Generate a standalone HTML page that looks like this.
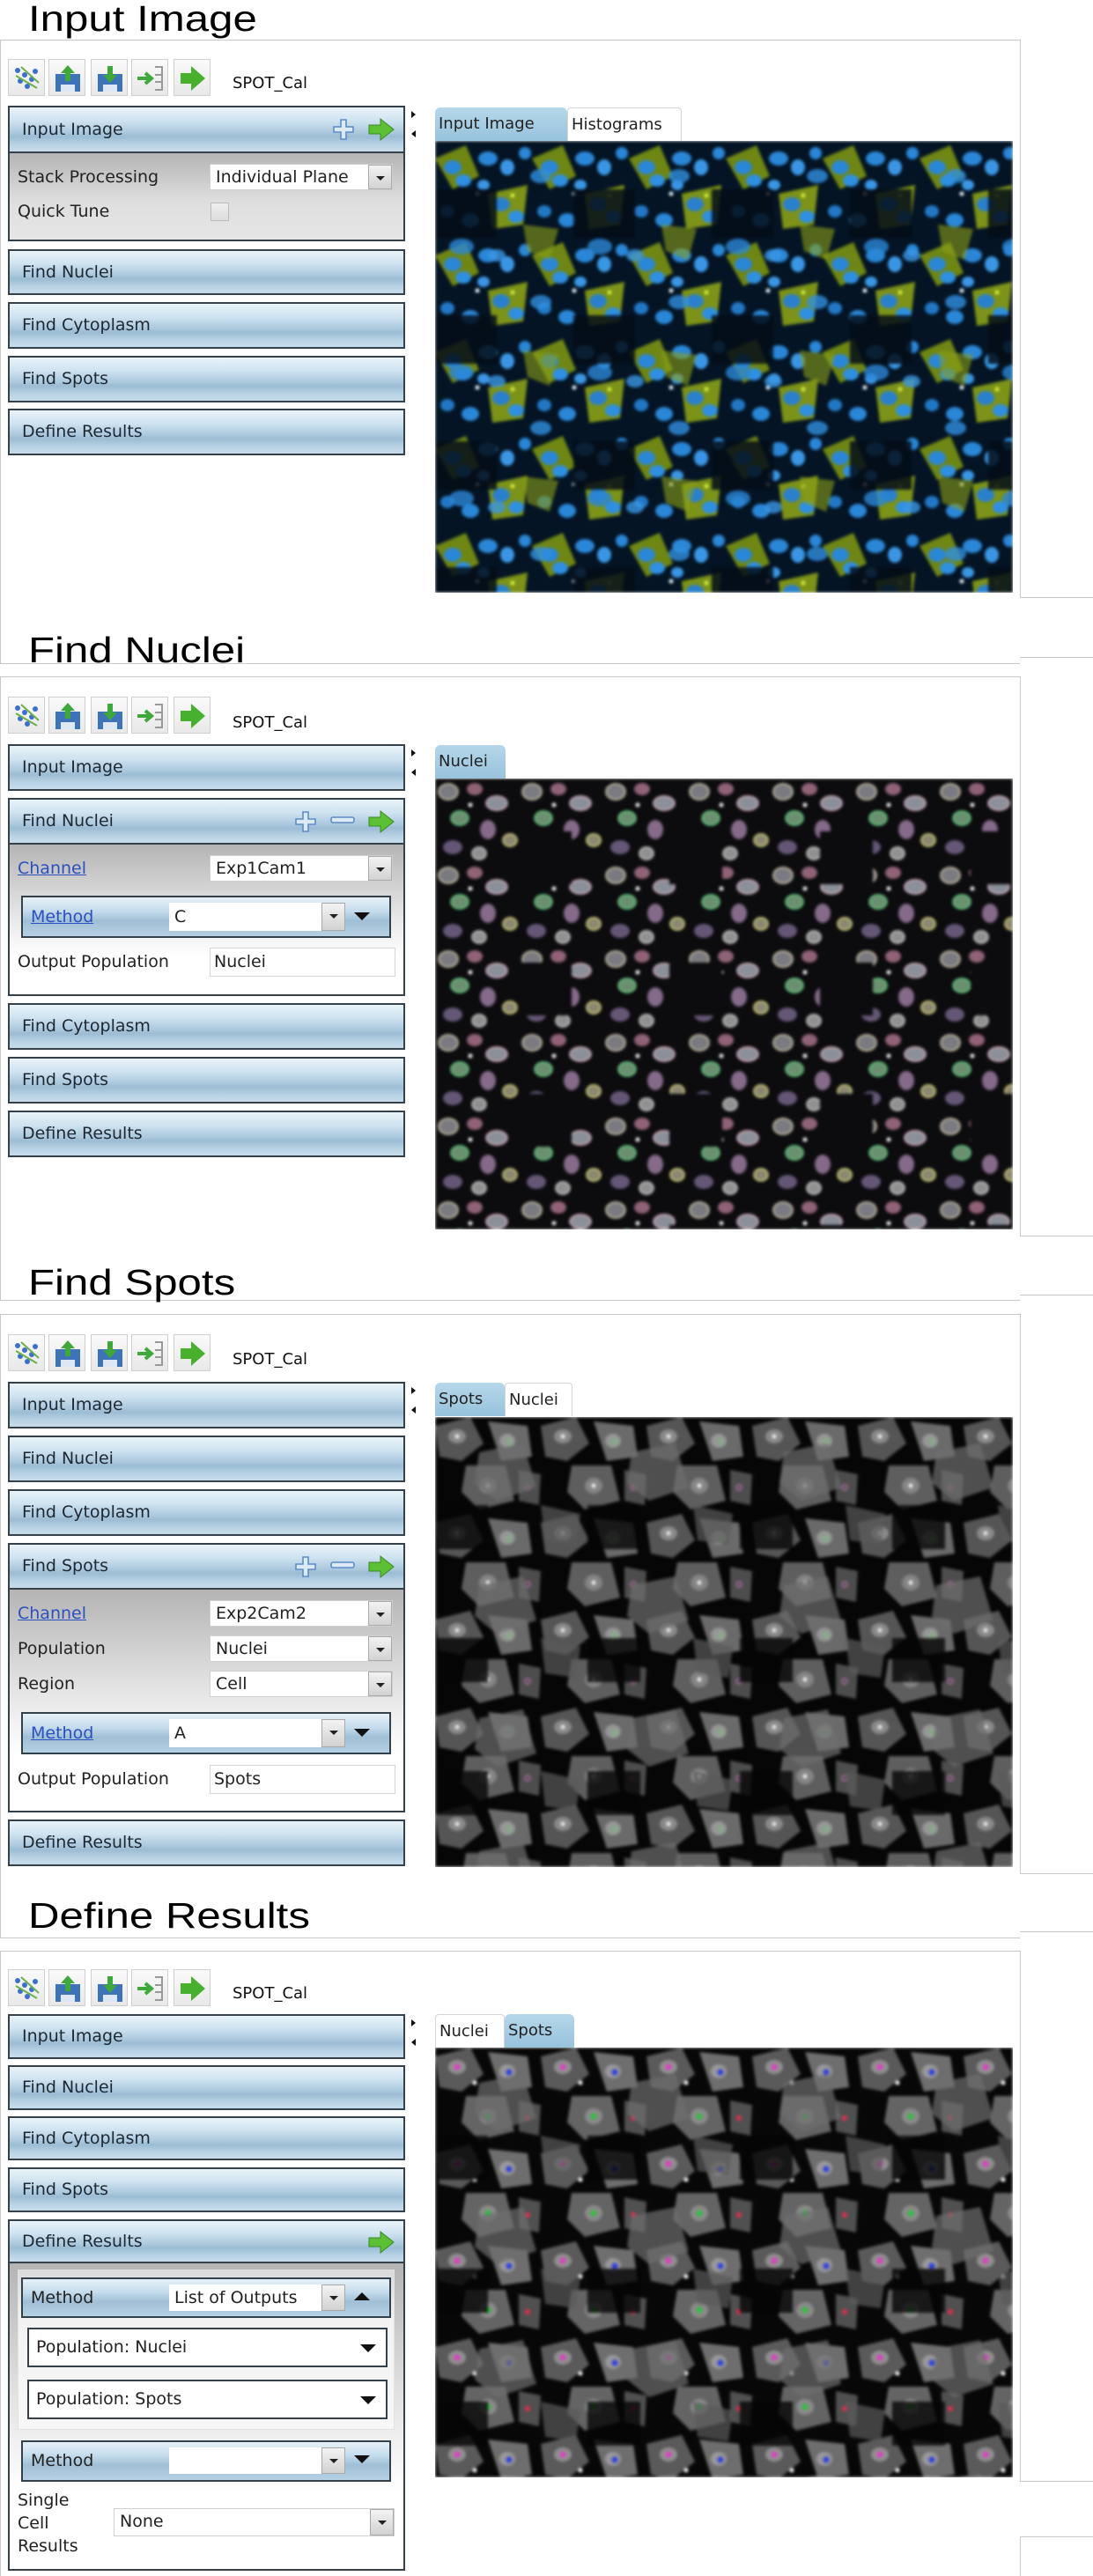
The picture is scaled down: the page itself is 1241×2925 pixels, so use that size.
<!DOCTYPE html>
<html><head><meta charset="utf-8">
<style>
*{margin:0;padding:0;box-sizing:border-box}
body{width:1241px;height:2925px;background:#fff;position:relative;overflow:hidden;font-family:"DejaVu Sans","Liberation Sans",sans-serif}
.a{position:absolute}
.ttl{position:absolute;left:32px;font:41px/41px "Liberation Sans",sans-serif;color:#000;transform:scaleX(1.2);transform-origin:0 0;white-space:nowrap}
.ln{position:absolute;background:#c8c8c8}
.ic{position:absolute;width:42px;height:42px;border:1px solid #cfcfcf;background:linear-gradient(#fafafa,#e8e8e8)}
.ic svg{position:absolute;left:4px;top:4px}
.spot{position:absolute;left:264px;font-size:18px;color:#111}
.hd{position:absolute;left:9px;width:451px;border:2px solid #34414b;background:linear-gradient(#e9f3f9 0%,#cfe3f0 30%,#a9c7dd 58%,#9bbcd4 66%,#b9d3e5 85%,#c7dcea 100%);font-size:19px;color:#1d2832;padding-left:14px}
.bd{position:absolute;left:9px;width:451px;border:2px solid #34414b;border-top:none}
.g1{background:linear-gradient(#b4b4b4 0%,#dedede 55%,#e6e6e6 100%)}
.g2{background:linear-gradient(#b4b4b4 0%,#e4e4e4 45%,#fff 75%,#fff 100%)}
.lb{position:absolute;left:20px;font-size:19px;color:#222;white-space:nowrap}
.lk{color:#2a4fc0;text-decoration:underline}
.sel{position:absolute;left:238px;width:208px;height:30px;background:#fff;border:1px solid #d0d0d0;font-size:19px;color:#222;padding-left:6px;line-height:28px;white-space:nowrap;overflow:hidden}
.sel .b,.mth .b{position:absolute;right:0;top:0;width:27px;height:100%;border:1px solid #a9a9a9;background:linear-gradient(#f3f3f3,#d2d2d2)}
.sel .b:after,.mth .b:after{content:"";position:absolute;left:8px;top:12px;border-left:5px solid transparent;border-right:5px solid transparent;border-top:5px solid #222}
.inp{position:absolute;left:238px;width:211px;height:33px;background:#fff;border:1px solid #d5d5d5;font-size:19px;color:#222;padding-left:4px;line-height:31px}
.mb{position:absolute;left:24px;width:420px;border:2px solid #34414b;background:linear-gradient(#e6f1f8 0%,#c5dcec 35%,#a0bfd6 60%,#b6d0e3 100%)}
.mb .t{position:absolute;left:9px;font-size:19px}
.mth{position:absolute;left:166px;width:200px;background:#fff;font-size:19px;padding-left:6px;color:#222;white-space:nowrap;overflow:hidden}
.tri{position:absolute;width:0;height:0;border-left:9px solid transparent;border-right:9px solid transparent}
.tri.dn{border-top:9px solid #111}
.tri.up{border-bottom:9px solid #111}
.tab{position:absolute;height:38px;font-size:18px;line-height:38px;padding:0 4px;color:#222;white-space:nowrap}
.tab.on{background:linear-gradient(#b6d7ea,#97c3dc);border-radius:6px 6px 0 0}
.tab.off{background:#fff;border:1px solid #d5d5d5;border-bottom:none;border-radius:4px 4px 0 0}
.pop{position:absolute;left:31px;width:409px;height:45px;background:#fff;border:2px solid #34414b;font-size:19px;color:#222;padding-left:8px;line-height:41px}
.col{position:absolute;left:467px;width:0;height:0;border-top:4px solid transparent;border-bottom:4px solid transparent}
.im{position:absolute;overflow:hidden}
.im svg{display:block;filter:blur(1.5px)}
</style></head><body>

<svg width="0" height="0" style="position:absolute">
<defs>
<pattern id="p1" width="110" height="110" patternUnits="userSpaceOnUse">
<rect width="110" height="110" fill="#041424"/>
<path d="M0 20L35 5L50 40L20 55Z" fill="#6f8614"/>
<path d="M60 60L105 50L100 95L65 100Z" fill="#7c9218"/>
<ellipse cx="20" cy="30" rx="10" ry="8" fill="#2a86d6"/>
<ellipse cx="32" cy="45" rx="9" ry="7" fill="#2f8fe0"/>
<ellipse cx="60" cy="20" rx="11" ry="8" fill="#2a86d6"/>
<ellipse cx="82" cy="30" rx="8" ry="9" fill="#3a96e4"/>
<ellipse cx="75" cy="72" rx="10" ry="8" fill="#2a80cc"/>
<ellipse cx="92" cy="86" rx="9" ry="7" fill="#2f8fe0"/>
<ellipse cx="40" cy="90" rx="10" ry="8" fill="#2a86d6"/>
<ellipse cx="14" cy="80" rx="8" ry="7" fill="#2277c4"/>
<ellipse cx="55" cy="50" rx="7" ry="6" fill="#3a96e4"/>
<ellipse cx="102" cy="14" rx="7" ry="7" fill="#2a86d6"/>
<circle cx="48" cy="60" r="2.5" fill="#e8f4ff"/><circle cx="88" cy="62" r="2.5" fill="#d8f040"/>
</pattern>
<pattern id="p1b" width="157" height="143" patternUnits="userSpaceOnUse">
<rect x="0" y="55" width="70" height="55" fill="#030d18" opacity=".85"/>
<ellipse cx="30" cy="120" rx="14" ry="9" fill="#2a86d6" opacity=".8"/>
<ellipse cx="120" cy="40" rx="12" ry="8" fill="#2f8fe0" opacity=".8"/>
<path d="M100 95L140 100L130 135L105 125Z" fill="#8a9e18" opacity=".6"/>
<ellipse cx="70" cy="130" rx="10" ry="7" fill="#3a96e4" opacity=".8"/>
</pattern>
<pattern id="p2" width="95" height="95" patternUnits="userSpaceOnUse">
<rect width="95" height="95" fill="#0c0b0e"/>
<ellipse cx="15" cy="15" rx="11" ry="9" fill="#7a7a80" stroke="#d8d0b0" stroke-width="1.5"/>
<ellipse cx="45" cy="12" rx="9" ry="7" fill="#b07890" opacity=".8"/>
<ellipse cx="70" cy="28" rx="12" ry="8" fill="#8a8f98" stroke="#e0b8c8" stroke-width="1.5"/>
<ellipse cx="28" cy="45" rx="10" ry="8" fill="#6a9070" stroke="#60d080" stroke-width="1.5"/>
<ellipse cx="60" cy="58" rx="9" ry="11" fill="#9a7aa0" opacity=".85"/>
<ellipse cx="85" cy="70" rx="8" ry="7" fill="#8a8870" stroke="#e0e080" stroke-width="1.5"/>
<ellipse cx="20" cy="78" rx="11" ry="8" fill="#7a6a90" opacity=".8"/>
<ellipse cx="50" cy="85" rx="8" ry="7" fill="#909090" stroke="#d0d0d0" stroke-width="1.5"/>
<circle cx="40" cy="30" r="2.5" fill="#f0f0f0"/>
</pattern>
<pattern id="p2b" width="171" height="149" patternUnits="userSpaceOnUse">
<rect x="95" y="60" width="60" height="60" fill="#0c0b0e"/>
</pattern>
<pattern id="p3" width="120" height="110" patternUnits="userSpaceOnUse">
<rect width="120" height="110" fill="#060606"/>
<path d="M0 10L40 0L55 30L30 50L5 45Z" fill="#555"/>
<path d="M60 5L105 10L110 45L75 50Z" fill="#6a6a6a"/>
<path d="M35 55L80 55L90 95L50 105L30 85Z" fill="#5e5e5e"/>
<path d="M95 60L120 65L118 100L95 95Z" fill="#4d4d4d"/>
<ellipse cx="25" cy="22" rx="10" ry="8" fill="#8a8a8a"/>
<ellipse cx="82" cy="27" rx="9" ry="8" fill="#969696"/>
<ellipse cx="60" cy="78" rx="10" ry="9" fill="#858585"/>
<circle cx="25" cy="22" r="2.5" fill="#eee"/><circle cx="60" cy="78" r="2.5" fill="#f4f4f4"/>
<circle cx="84" cy="28" r="3" fill="none" stroke="#70d070" stroke-width="1"/>
<circle cx="105" cy="80" r="3" fill="none" stroke="#e080d0" stroke-width="1"/>
</pattern>
<pattern id="p3b" width="173" height="151" patternUnits="userSpaceOnUse">
<path d="M50 40L100 30L115 80L70 95L45 75Z" fill="#6e6e6e" opacity=".7"/>
<path d="M120 100L165 110L160 145L125 140Z" fill="#5a5a5a" opacity=".7"/>
<rect x="0" y="100" width="60" height="50" fill="#050505" opacity=".8"/>
</pattern>
<pattern id="p4" width="120" height="110" patternUnits="userSpaceOnUse">
<rect width="120" height="110" fill="#070707"/>
<path d="M0 10L40 0L55 30L30 50L5 45Z" fill="#5a5a5a"/>
<path d="M60 5L105 10L110 45L75 50Z" fill="#6e6e6e"/>
<path d="M35 55L80 55L90 95L50 105L30 85Z" fill="#646464"/>
<path d="M95 60L120 65L118 100L95 95Z" fill="#505050"/>
<ellipse cx="25" cy="22" rx="10" ry="8" fill="#8f8f8f"/>
<ellipse cx="82" cy="27" rx="9" ry="8" fill="#999"/>
<ellipse cx="60" cy="78" rx="10" ry="9" fill="#8a8a8a"/>
<circle cx="25" cy="22" r="3.5" fill="#e040c0"/><circle cx="60" cy="78" r="3.5" fill="#30c040"/>
<circle cx="84" cy="28" r="3.5" fill="#3040e0"/>
<circle cx="105" cy="80" r="3" fill="#e03050"/>
<circle cx="45" cy="40" r="2.5" fill="#fff"/>
</pattern>
</defs></svg>

<!-- frame lines -->
<div class="ln" style="left:0;top:45px;width:1158px;height:1px"></div>
<div class="ln" style="left:0;top:45px;width:1px;height:708px"></div>
<div class="ln" style="left:1158px;top:45px;width:1px;height:634px"></div>
<div class="ln" style="left:1158px;top:678px;width:83px;height:1px"></div>
<div class="ln" style="left:0;top:753px;width:1158px;height:1px"></div>
<div class="ln" style="left:1158px;top:746px;width:83px;height:1px"></div>

<div class="ln" style="left:0;top:768px;width:1158px;height:1px"></div>
<div class="ln" style="left:0;top:768px;width:1px;height:709px"></div>
<div class="ln" style="left:1158px;top:768px;width:1px;height:635px"></div>
<div class="ln" style="left:1158px;top:1403px;width:83px;height:1px"></div>
<div class="ln" style="left:0;top:1476px;width:1158px;height:1px"></div>
<div class="ln" style="left:1158px;top:1470px;width:83px;height:1px"></div>

<div class="ln" style="left:0;top:1492px;width:1158px;height:1px"></div>
<div class="ln" style="left:0;top:1492px;width:1px;height:709px"></div>
<div class="ln" style="left:1158px;top:1492px;width:1px;height:635px"></div>
<div class="ln" style="left:1158px;top:2127px;width:83px;height:1px"></div>
<div class="ln" style="left:0;top:2200px;width:1158px;height:1px"></div>
<div class="ln" style="left:1158px;top:2193px;width:83px;height:1px"></div>

<div class="ln" style="left:0;top:2215px;width:1158px;height:1px"></div>
<div class="ln" style="left:0;top:2215px;width:1px;height:710px"></div>
<div class="ln" style="left:1158px;top:2215px;width:1px;height:602px"></div>
<div class="ln" style="left:1158px;top:2817px;width:83px;height:1px"></div>
<div class="ln" style="left:1158px;top:2880px;width:83px;height:1px"></div>
<div class="ln" style="left:1158px;top:2880px;width:1px;height:45px"></div>

<!-- titles -->
<div class="ttl" style="top:1px">Input Image</div>
<div class="ttl" style="top:718px">Find Nuclei</div>
<div class="ttl" style="top:1436px">Find Spots</div>
<div class="ttl" style="top:2155px">Define Results</div>

<!-- SECTION 1 -->
<div class="ic" style="left:9px;top:67px"><svg width="34" height="34"><g fill="#3b6fd0"><circle cx="6" cy="8" r="3"/><circle cx="14" cy="13" r="3"/><circle cx="22" cy="18" r="3"/><circle cx="9" cy="20" r="3"/><circle cx="17" cy="26" r="3"/><circle cx="26" cy="9" r="3"/></g><path d="M4 14L28 28M10 4L30 22" stroke="#6ab04a" stroke-width="2"/></svg></div>
<div class="ic" style="left:55px;top:67px"><svg width="34" height="34"><rect x="3" y="12" width="28" height="20" fill="#3f73b8"/><rect x="9" y="24" width="16" height="8" fill="#dde8f4"/><path d="M17 2L25 11H20V20H14V11H9Z" fill="#3fa83a"/></svg></div>
<div class="ic" style="left:103px;top:67px"><svg width="34" height="34"><rect x="3" y="12" width="28" height="20" fill="#3f73b8"/><rect x="9" y="24" width="16" height="8" fill="#dde8f4"/><path d="M17 22L25 13H20V3H14V13H9Z" fill="#3fa83a"/></svg></div>
<div class="ic" style="left:149px;top:67px"><svg width="34" height="34"><path d="M22 4H30V30H22M22 13H30M22 21H30" stroke="#999" stroke-width="2" fill="none"/><path d="M2 17H16M11 11L18 17L11 23" stroke="#3fa83a" stroke-width="4" fill="none"/></svg></div>
<div class="ic" style="left:197px;top:67px"><svg width="34" height="34"><path d="M3 11H15V3L31 17L15 31V23H3Z" fill="#47b02c"/></svg></div>
<div class="spot" style="top:84px">SPOT_Cal</div>

<div class="hd" style="top:120px;height:54px;line-height:50px">Input Image
<svg class="a" style="left:366px;top:12px" width="26" height="26"><path d="M10 2H16V10H24V16H16V24H10V16H2V10H10Z" fill="#dceaf6" stroke="#5b8cc8" stroke-width="1.6"/></svg>
<svg class="a" style="left:406px;top:11px" width="32" height="28"><path d="M2 9H15V2L30 14L15 26V19H2Z" fill="#5cc035" stroke="#3a8a20" stroke-width="1"/></svg></div>
<div class="bd g1" style="top:174px;height:100px"></div>
<div class="lb" style="top:190px">Stack Processing</div>
<div class="sel" style="top:186px">Individual Plane<div class="b"></div></div>
<div class="lb" style="top:229px">Quick Tune</div>
<div class="a" style="left:239px;top:230px;width:21px;height:21px;border:1px solid #bbb;background:linear-gradient(#eee,#ddd)"></div>
<div class="hd" style="top:283px;height:52px;line-height:48px">Find Nuclei</div>
<div class="hd" style="top:343px;height:53px;line-height:49px">Find Cytoplasm</div>
<div class="hd" style="top:404px;height:53px;line-height:49px">Find Spots</div>
<div class="hd" style="top:464px;height:53px;line-height:49px">Define Results</div>
<div class="col" style="top:126px;border-left:5px solid #111"></div>
<div class="col" style="top:148px;border-right:5px solid #111;left:467px"></div>
<div class="tab on" style="left:494px;top:122px;width:150px">Input Image</div>
<div class="tab off" style="left:644px;top:122px;width:130px">Histograms</div>
<div class="im" style="left:494px;top:160px;width:656px;height:513px"><svg width="656" height="513"><rect width="656" height="513" fill="url(#p1)"/><rect width="656" height="513" fill="url(#p1b)"/></svg></div>

<!-- SECTION 2 -->
<div class="ic" style="left:9px;top:791px"><svg width="34" height="34"><g fill="#3b6fd0"><circle cx="6" cy="8" r="3"/><circle cx="14" cy="13" r="3"/><circle cx="22" cy="18" r="3"/><circle cx="9" cy="20" r="3"/><circle cx="17" cy="26" r="3"/><circle cx="26" cy="9" r="3"/></g><path d="M4 14L28 28M10 4L30 22" stroke="#6ab04a" stroke-width="2"/></svg></div>
<div class="ic" style="left:55px;top:791px"><svg width="34" height="34"><rect x="3" y="12" width="28" height="20" fill="#3f73b8"/><rect x="9" y="24" width="16" height="8" fill="#dde8f4"/><path d="M17 2L25 11H20V20H14V11H9Z" fill="#3fa83a"/></svg></div>
<div class="ic" style="left:103px;top:791px"><svg width="34" height="34"><rect x="3" y="12" width="28" height="20" fill="#3f73b8"/><rect x="9" y="24" width="16" height="8" fill="#dde8f4"/><path d="M17 22L25 13H20V3H14V13H9Z" fill="#3fa83a"/></svg></div>
<div class="ic" style="left:149px;top:791px"><svg width="34" height="34"><path d="M22 4H30V30H22M22 13H30M22 21H30" stroke="#999" stroke-width="2" fill="none"/><path d="M2 17H16M11 11L18 17L11 23" stroke="#3fa83a" stroke-width="4" fill="none"/></svg></div>
<div class="ic" style="left:197px;top:791px"><svg width="34" height="34"><path d="M3 11H15V3L31 17L15 31V23H3Z" fill="#47b02c"/></svg></div>
<div class="spot" style="top:810px">SPOT_Cal</div>

<div class="hd" style="top:845px;height:53px;line-height:49px">Input Image</div>
<div class="hd" style="top:906px;height:53px;line-height:49px">Find Nuclei
<svg class="a" style="left:323px;top:12px" width="26" height="26"><path d="M10 2H16V10H24V16H16V24H10V16H2V10H10Z" fill="#dceaf6" stroke="#5b8cc8" stroke-width="1.6"/></svg>
<svg class="a" style="left:364px;top:19px" width="28" height="10"><rect x="1" y="1" width="26" height="6" rx="2" fill="#dceaf6" stroke="#5b8cc8" stroke-width="1.6"/></svg>
<svg class="a" style="left:406px;top:11px" width="32" height="28"><path d="M2 9H15V2L30 14L15 26V19H2Z" fill="#5cc035" stroke="#3a8a20" stroke-width="1"/></svg></div>
<div class="bd g2" style="top:959px;height:172px"></div>
<div class="lb" style="top:975px"><span class="lk">Channel</span></div>
<div class="sel" style="top:971px">Exp1Cam1<div class="b"></div></div>
<div class="mb" style="top:1017px;height:48px"><span class="t lk" style="top:11px">Method</span>
<div class="mth" style="top:6px;height:32px;line-height:32px">C<div class="b"></div></div>
<div class="tri dn" style="left:376px;top:17px"></div></div>
<div class="lb" style="top:1081px">Output Population</div>
<div class="inp" style="top:1076px">Nuclei</div>
<div class="hd" style="top:1139px;height:53px;line-height:49px">Find Cytoplasm</div>
<div class="hd" style="top:1200px;height:53px;line-height:49px">Find Spots</div>
<div class="hd" style="top:1261px;height:53px;line-height:49px">Define Results</div>
<div class="col" style="top:851px;border-left:5px solid #111"></div>
<div class="col" style="top:873px;border-right:5px solid #111"></div>
<div class="tab on" style="left:494px;top:846px;width:80px">Nuclei</div>
<div class="im" style="left:494px;top:884px;width:656px;height:512px"><svg width="656" height="512"><rect width="656" height="512" fill="url(#p2)"/><rect width="656" height="512" fill="url(#p2b)"/></svg></div>

<!-- SECTION 3 -->
<div class="ic" style="left:9px;top:1515px"><svg width="34" height="34"><g fill="#3b6fd0"><circle cx="6" cy="8" r="3"/><circle cx="14" cy="13" r="3"/><circle cx="22" cy="18" r="3"/><circle cx="9" cy="20" r="3"/><circle cx="17" cy="26" r="3"/><circle cx="26" cy="9" r="3"/></g><path d="M4 14L28 28M10 4L30 22" stroke="#6ab04a" stroke-width="2"/></svg></div>
<div class="ic" style="left:55px;top:1515px"><svg width="34" height="34"><rect x="3" y="12" width="28" height="20" fill="#3f73b8"/><rect x="9" y="24" width="16" height="8" fill="#dde8f4"/><path d="M17 2L25 11H20V20H14V11H9Z" fill="#3fa83a"/></svg></div>
<div class="ic" style="left:103px;top:1515px"><svg width="34" height="34"><rect x="3" y="12" width="28" height="20" fill="#3f73b8"/><rect x="9" y="24" width="16" height="8" fill="#dde8f4"/><path d="M17 22L25 13H20V3H14V13H9Z" fill="#3fa83a"/></svg></div>
<div class="ic" style="left:149px;top:1515px"><svg width="34" height="34"><path d="M22 4H30V30H22M22 13H30M22 21H30" stroke="#999" stroke-width="2" fill="none"/><path d="M2 17H16M11 11L18 17L11 23" stroke="#3fa83a" stroke-width="4" fill="none"/></svg></div>
<div class="ic" style="left:197px;top:1515px"><svg width="34" height="34"><path d="M3 11H15V3L31 17L15 31V23H3Z" fill="#47b02c"/></svg></div>
<div class="spot" style="top:1533px">SPOT_Cal</div>

<div class="hd" style="top:1569px;height:53px;line-height:49px">Input Image</div>
<div class="hd" style="top:1630px;height:53px;line-height:49px">Find Nuclei</div>
<div class="hd" style="top:1691px;height:53px;line-height:49px">Find Cytoplasm</div>
<div class="hd" style="top:1752px;height:53px;line-height:49px">Find Spots
<svg class="a" style="left:323px;top:12px" width="26" height="26"><path d="M10 2H16V10H24V16H16V24H10V16H2V10H10Z" fill="#dceaf6" stroke="#5b8cc8" stroke-width="1.6"/></svg>
<svg class="a" style="left:364px;top:19px" width="28" height="10"><rect x="1" y="1" width="26" height="6" rx="2" fill="#dceaf6" stroke="#5b8cc8" stroke-width="1.6"/></svg>
<svg class="a" style="left:406px;top:11px" width="32" height="28"><path d="M2 9H15V2L30 14L15 26V19H2Z" fill="#5cc035" stroke="#3a8a20" stroke-width="1"/></svg></div>
<div class="bd g2" style="top:1805px;height:253px"></div>
<div class="lb" style="top:1821px"><span class="lk">Channel</span></div>
<div class="sel" style="top:1817px">Exp2Cam2<div class="b"></div></div>
<div class="lb" style="top:1861px">Population</div>
<div class="sel" style="top:1857px">Nuclei<div class="b"></div></div>
<div class="lb" style="top:1901px">Region</div>
<div class="sel" style="top:1897px">Cell<div class="b"></div></div>
<div class="mb" style="top:1944px;height:48px"><span class="t lk" style="top:11px">Method</span>
<div class="mth" style="top:6px;height:32px;line-height:32px">A<div class="b"></div></div>
<div class="tri dn" style="left:376px;top:17px"></div></div>
<div class="lb" style="top:2009px">Output Population</div>
<div class="inp" style="top:2004px">Spots</div>
<div class="hd" style="top:2066px;height:53px;line-height:49px">Define Results</div>
<div class="col" style="top:1575px;border-left:5px solid #111"></div>
<div class="col" style="top:1597px;border-right:5px solid #111"></div>
<div class="tab on" style="left:494px;top:1570px;width:79px">Spots</div>
<div class="tab off" style="left:573px;top:1570px;width:77px">Nuclei</div>
<div class="im" style="left:494px;top:1609px;width:656px;height:511px"><svg width="656" height="511"><rect width="656" height="511" fill="url(#p3)"/><rect width="656" height="511" fill="url(#p3b)"/></svg></div>

<!-- SECTION 4 -->
<div class="ic" style="left:9px;top:2236px"><svg width="34" height="34"><g fill="#3b6fd0"><circle cx="6" cy="8" r="3"/><circle cx="14" cy="13" r="3"/><circle cx="22" cy="18" r="3"/><circle cx="9" cy="20" r="3"/><circle cx="17" cy="26" r="3"/><circle cx="26" cy="9" r="3"/></g><path d="M4 14L28 28M10 4L30 22" stroke="#6ab04a" stroke-width="2"/></svg></div>
<div class="ic" style="left:55px;top:2236px"><svg width="34" height="34"><rect x="3" y="12" width="28" height="20" fill="#3f73b8"/><rect x="9" y="24" width="16" height="8" fill="#dde8f4"/><path d="M17 2L25 11H20V20H14V11H9Z" fill="#3fa83a"/></svg></div>
<div class="ic" style="left:103px;top:2236px"><svg width="34" height="34"><rect x="3" y="12" width="28" height="20" fill="#3f73b8"/><rect x="9" y="24" width="16" height="8" fill="#dde8f4"/><path d="M17 22L25 13H20V3H14V13H9Z" fill="#3fa83a"/></svg></div>
<div class="ic" style="left:149px;top:2236px"><svg width="34" height="34"><path d="M22 4H30V30H22M22 13H30M22 21H30" stroke="#999" stroke-width="2" fill="none"/><path d="M2 17H16M11 11L18 17L11 23" stroke="#3fa83a" stroke-width="4" fill="none"/></svg></div>
<div class="ic" style="left:197px;top:2236px"><svg width="34" height="34"><path d="M3 11H15V3L31 17L15 31V23H3Z" fill="#47b02c"/></svg></div>
<div class="spot" style="top:2253px">SPOT_Cal</div>

<div class="hd" style="top:2287px;height:51px;line-height:47px">Input Image</div>
<div class="hd" style="top:2345px;height:51px;line-height:47px">Find Nuclei</div>
<div class="hd" style="top:2403px;height:50px;line-height:46px">Find Cytoplasm</div>
<div class="hd" style="top:2461px;height:51px;line-height:47px">Find Spots</div>
<div class="hd" style="top:2520px;height:50px;line-height:46px">Define Results
<svg class="a" style="left:406px;top:10px" width="32" height="28"><path d="M2 9H15V2L30 14L15 26V19H2Z" fill="#5cc035" stroke="#3a8a20" stroke-width="1"/></svg></div>
<div class="bd g2" style="top:2570px;height:349px"></div>
<div class="a" style="left:20px;top:2577px;width:428px;height:182px;background:linear-gradient(#dadada,#f2f2f2 30%,#f7f7f7);border:1px solid #e2e2e2"></div>
<div class="mb" style="top:2586px;height:46px"><span class="t" style="top:10px;color:#222">Method</span>
<div class="mth" style="top:6px;height:30px;line-height:30px">List of Outputs<div class="b"></div></div>
<div class="tri up" style="left:376px;top:15px"></div></div>
<div class="pop" style="top:2643px">Population: Nuclei<div class="tri dn" style="left:376px;top:17px"></div></div>
<div class="pop" style="top:2702px">Population: Spots<div class="tri dn" style="left:376px;top:17px"></div></div>
<div class="mb" style="top:2771px;height:47px"><span class="t" style="top:10px;color:#222">Method</span>
<div class="mth" style="top:6px;height:30px;line-height:30px"><div class="b"></div></div>
<div class="tri dn" style="left:376px;top:15px"></div></div>
<div class="lb" style="top:2826px;line-height:26px">Single<br>Cell<br>Results</div>
<div class="sel" style="left:129px;width:319px;top:2848px;height:32px">None<div class="b"></div></div>
<div class="col" style="top:2293px;border-left:5px solid #111"></div>
<div class="col" style="top:2315px;border-right:5px solid #111"></div>
<div class="tab off" style="left:494px;top:2287px;width:79px">Nuclei</div>
<div class="tab on" style="left:573px;top:2287px;width:79px">Spots</div>
<div class="im" style="left:494px;top:2325px;width:656px;height:488px"><svg width="656" height="488"><rect width="656" height="488" fill="url(#p4)"/><rect width="656" height="488" fill="url(#p3b)"/></svg></div>

</body></html>
